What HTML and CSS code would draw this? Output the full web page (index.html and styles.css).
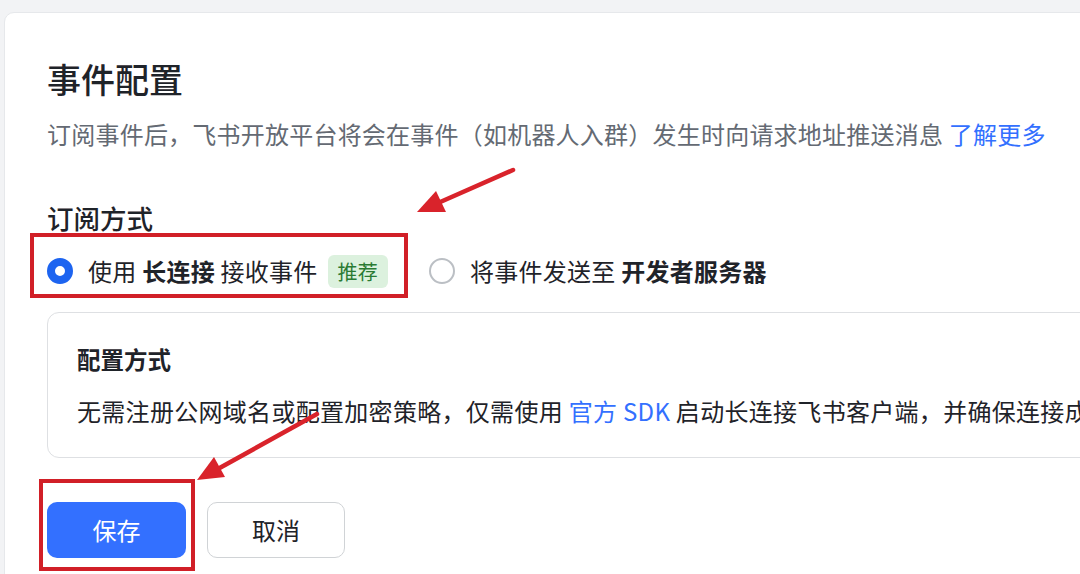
FILE: index.html
```html
<!DOCTYPE html>
<html lang="zh-CN">
<head>
<meta charset="utf-8">
<title>事件配置</title>
<link rel="stylesheet" href="styles.css">
</head>
<body>
<div class="page">
  <section class="card">
    <h1 class="title">事件配置</h1>
    <p class="desc">订阅事件后，飞书开放平台将会在事件（如机器人入群）发生时向请求地址推送消息 <a class="link" href="#">了解更多</a></p>
    <h2 class="section-title">订阅方式</h2>
    <div class="radio-group">
      <label class="radio-option">
        <span class="radio radio-checked"></span>
        <span class="radio-text">使用 <b>长连接</b> 接收事件</span>
        <span class="tag">推荐</span>
      </label>
      <label class="radio-option">
        <span class="radio"></span>
        <span class="radio-text">将事件发送至 <b>开发者服务器</b></span>
      </label>
    </div>
    <div class="config-box">
      <div class="config-title">配置方式</div>
      <div class="config-desc">无需注册公网域名或配置加密策略，仅需使用 <a class="link" href="#">官方 SDK</a> 启动长连接飞书客户端，并确保连接成功</div>
    </div>
    <div class="actions">
      <button class="btn btn-primary">保存</button>
      <button class="btn btn-default">取消</button>
    </div>
  </section>
  <svg class="annotations" width="1080" height="574" viewBox="0 0 1080 574">
    <rect x="32" y="235" width="374" height="61" fill="none" stroke="#d11f27" stroke-width="4"/>
    <rect x="41" y="481" width="152" height="88" fill="none" stroke="#d11f27" stroke-width="4"/>
    <line x1="513" y1="170" x2="438" y2="203" stroke="#d9232b" stroke-width="4.5" stroke-linecap="round"/>
    <polygon points="417,212 436,191 446,212" fill="#d9232b"/>
    <line x1="317" y1="414" x2="216" y2="470" stroke="#d9232b" stroke-width="4.5" stroke-linecap="round"/>
    <polygon points="197,480 214,457 225,477" fill="#d9232b"/>
  </svg>
</div>
</body>
</html>
```

FILE: styles.css
```css
* {
  box-sizing: border-box;
}

html, body {
  margin: 0;
  padding: 0;
  width: 1080px;
  height: 574px;
  overflow: hidden;
  background: #f2f3f5;
}

body {
  font-family: "Noto Sans CJK SC", "Noto Sans", "Liberation Sans", sans-serif;
  color: #1f2329;
}

.page {
  position: relative;
  width: 1080px;
  height: 574px;
  padding: 12px 0 0 4px;
  overflow: hidden;
}

.card {
  width: 1240px;
  height: 640px;
  background: #ffffff;
  border: 1px solid #e6e8eb;
  border-radius: 10px 0 0 0;
  padding: 43px 0 0 42px;
}

.title {
  margin: 0;
  font-size: 34px;
  line-height: 46px;
  font-weight: 500;
  color: #1f2329;
}

.desc {
  margin: 15px 0 0;
  font-size: 24px;
  line-height: 34px;
  letter-spacing: 0.22px;
  color: #646a73;
  white-space: nowrap;
}

.link {
  color: #3370ff;
  text-decoration: none;
}

.section-title {
  margin: 50px 0 0;
  font-size: 26.5px;
  line-height: 34px;
  font-weight: 500;
  color: #1f2329;
}

.radio-group {
  display: flex;
  align-items: center;
  gap: 41px;
  height: 40px;
  margin-top: 16px;
}

.radio-option {
  display: flex;
  align-items: center;
  font-size: 24px;
  line-height: 34px;
  letter-spacing: 0.25px;
  color: #1f2329;
  white-space: nowrap;
}

.radio-option b {
  font-weight: 700;
}

.radio {
  width: 26px;
  height: 26px;
  border-radius: 50%;
  border: 2px solid #bbbfc4;
  background: #fff;
  margin-right: 15px;
  flex: none;
}

.radio-checked {
  border: 8.5px solid #1d64f0;
}

.tag {
  margin-left: 10px;
  height: 33px;
  padding: 0 10px;
  border-radius: 6px;
  background: #dcf1de;
  color: #2a7a33;
  font-size: 20px;
  line-height: 33px;
}

.config-box {
  margin-top: 21px;
  height: 146px;
  border: 1px solid #dee0e3;
  border-radius: 12px;
  padding: 30px 0 0 29px;
  white-space: nowrap;
  overflow: hidden;
}

.config-title {
  font-size: 23.5px;
  line-height: 32px;
  font-weight: 700;
  color: #1f2329;
}

.config-desc {
  margin-top: 19px;
  font-size: 24px;
  line-height: 34px;
  letter-spacing: 0.3px;
  color: #1f2329;
}

.actions {
  display: flex;
  gap: 21px;
  margin-top: 44px;
}

.btn {
  height: 56px;
  border-radius: 10px;
  font-family: inherit;
  font-size: 24px;
  line-height: 1;
  cursor: pointer;
}

.btn-primary {
  width: 139px;
  border: none;
  background: #3370ff;
  color: #ffffff;
}

.btn-default {
  width: 138px;
  border: 1.5px solid #d0d3d6;
  background: #ffffff;
  color: #1f2329;
}

.annotations {
  position: absolute;
  left: 0;
  top: 0;
  pointer-events: none;
}
```
